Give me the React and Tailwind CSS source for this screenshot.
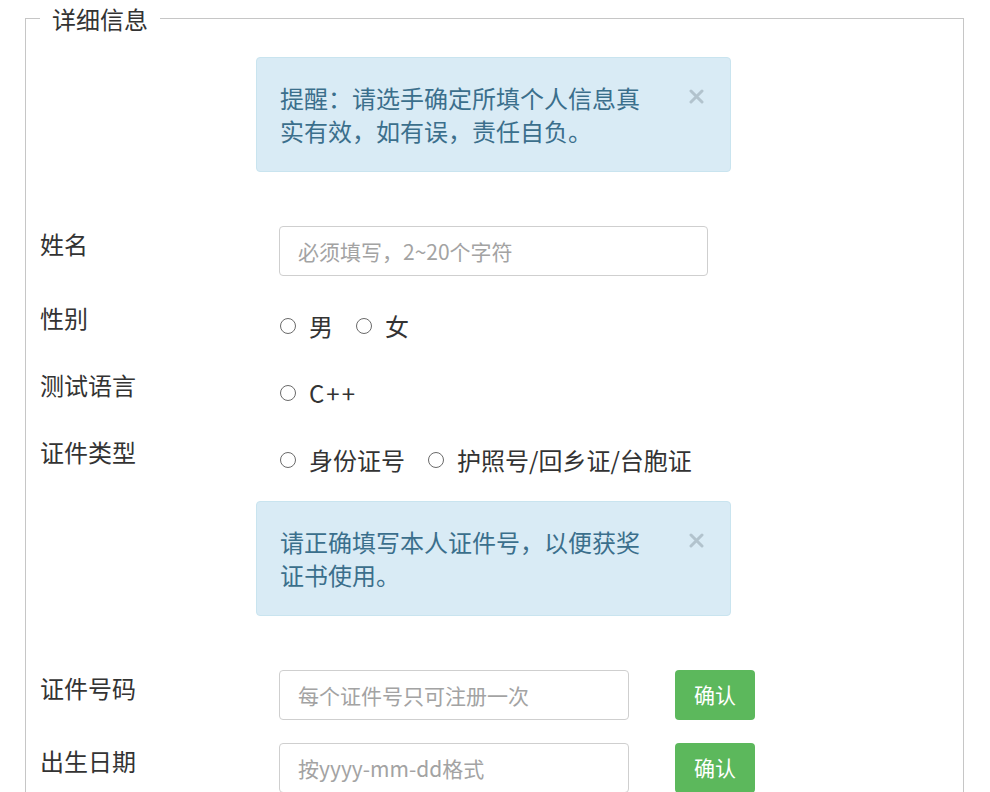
import React from "react";

function Radio({ children }) {
  return (
    <span className="flex items-center">
      <span className="w-[16px] h-[16px] rounded-full border border-[#6a6a6a] bg-white shrink-0" />
      <span className="ml-[13px]">{children}</span>
    </span>
  );
}

function Alert({ children }) {
  return (
    <div className="relative ml-[216px] w-[475px] rounded-[4px] border border-[#c9e4ef] bg-[#d9ebf5] pl-[23px] pt-[23px] pb-[24px] text-[24px] leading-[33px] text-[#3b6f8c]">
      <div className="w-[372px]">{children}</div>
      <svg
        className="absolute right-[26px] top-[31px]"
        width="15"
        height="15"
        viewBox="0 0 15 15"
      >
        <path d="M2 2 L13 13 M13 2 L2 13" stroke="#b2c3cd" strokeWidth="3" strokeLinecap="round" />
      </svg>
    </div>
  );
}

function Label({ children }) {
  return (
    <div className="w-[239px] shrink-0 pt-px text-[24px] leading-[34px] text-[#333]">
      {children}
    </div>
  );
}

function Input({ placeholder, w }) {
  return (
    <input
      className={`${w} h-[50px] rounded-[4px] border border-[#cfcfcf] bg-white px-[18px] text-[21px] text-[#555] placeholder:text-[#a3a3a3] outline-none`}
      placeholder={placeholder}
    />
  );
}

function Button() {
  return (
    <button className="ml-[46px] w-[80px] h-[50px] rounded-[4px] bg-[#5cb85c] text-[21px] text-white">
      确认
    </button>
  );
}

export default function App() {
  return (
    <div className="min-h-[792px] bg-white overflow-hidden font-['Noto_Sans_CJK_SC','Microsoft_YaHei',sans-serif]">
      <fieldset className="ml-[25px] w-[939px] border border-[#c6c6c6] pl-[14px] pb-[40px]">
        <legend className="px-[12px] pt-[2px] text-[24px] leading-[34px] text-[#333]">详细信息</legend>

        <div className="mt-[21px]">
          <Alert>提醒：请选手确定所填个人信息真实有效，如有误，责任自负。</Alert>
        </div>

        <div className="mt-[54px] flex">
          <Label>姓名</Label>
          <Input w="w-[429px]" placeholder="必须填写，2~20个字符" />
        </div>

        <div className="mt-[24px] flex">
          <Label>性别</Label>
          <div className="pt-[9px] flex items-center gap-[23px] ml-px text-[24px] leading-[34px] text-[#333]">
            <Radio>男</Radio>
            <Radio>女</Radio>
          </div>
        </div>

        <div className="mt-[24px] flex">
          <Label>测试语言</Label>
          <div className="pt-[9px] flex items-center gap-[23px] ml-px text-[24px] leading-[34px] text-[#333]">
            <Radio><span className="tracking-[2px]">C++</span></Radio>
          </div>
        </div>

        <div className="mt-[24px] flex">
          <Label>证件类型</Label>
          <div className="pt-[9px] flex items-center gap-[23px] ml-px text-[24px] leading-[34px] text-[#333]">
            <Radio>身份证号</Radio>
            <Radio>护照号/回乡证/台胞证</Radio>
          </div>
        </div>

        <div className="mt-[24px]">
          <Alert>请正确填写本人证件号，以便获奖证书使用。</Alert>
        </div>

        <div className="mt-[54px] flex">
          <Label>证件号码</Label>
          <Input w="w-[350px]" placeholder="每个证件号只可注册一次" />
          <Button />
        </div>

        <div className="mt-[23px] flex">
          <Label>出生日期</Label>
          <Input w="w-[350px]" placeholder="按yyyy-mm-dd格式" />
          <Button />
        </div>
      </fieldset>
    </div>
  );
}
